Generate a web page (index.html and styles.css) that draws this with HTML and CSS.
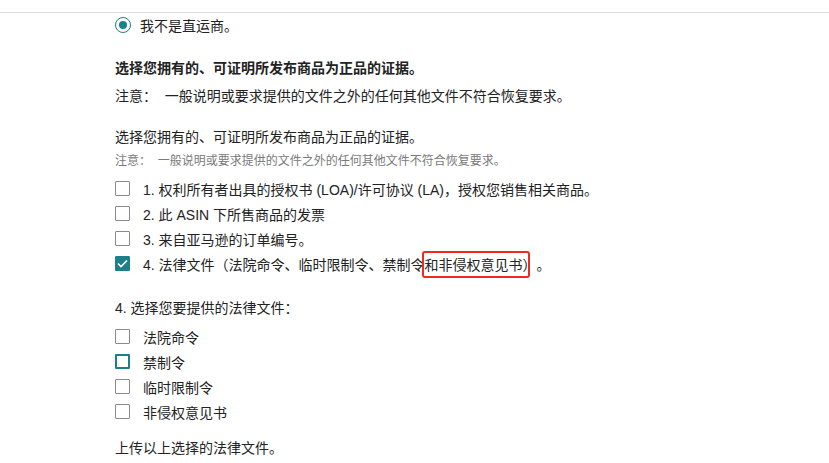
FILE: index.html
```html
<!DOCTYPE html>
<html lang="zh-CN">
<head>
  <meta charset="UTF-8" />
  <title>法律文件</title>
  <link rel="stylesheet" href="styles.css">
</head>
<body>
  <div class="top-bar"></div>

  <div class="content">
    <label class="radio-row">
      <span class="radio"><span class="radio-dot"></span></span>
      <span>我不是直运商。</span>
    </label>

    <p class="title-bold">选择您拥有的、可证明所发布商品为正品的证据。</p>
    <p class="note">注意：&nbsp; 一般说明或要求提供的文件之外的任何其他文件不符合恢复要求。</p>

    <p class="title">选择您拥有的、可证明所发布商品为正品的证据。</p>
    <p class="note-small">注意：&nbsp; 一般说明或要求提供的文件之外的任何其他文件不符合恢复要求。</p>

    <ul class="checks">
      <li><span class="box"></span>1. 权利所有者出具的授权书 (LOA)/许可协议 (LA)，授权您销售相关商品。</li>
      <li><span class="box"></span>2. 此 ASIN 下所售商品的发票</li>
      <li><span class="box"></span>3. 来自亚马逊的订单编号。</li>
      <li>
        <span class="box checked">
          <svg width="11" height="9" viewBox="0 0 11 9"><path d="M1 4.5 L4 7.5 L10 1.5" fill="none" stroke="#fff" stroke-width="1.6"/></svg>
        </span>4. 法律文件（法院命令、临时限制令、禁制令<span class="mark">和非侵权意见书）</span>。
      </li>
    </ul>

    <p class="title sub">4. 选择您要提供的法律文件：</p>

    <ul class="checks second">
      <li><span class="box"></span>法院命令</li>
      <li><span class="box focused"></span>禁制令</li>
      <li><span class="box"></span>临时限制令</li>
      <li><span class="box"></span>非侵权意见书</li>
    </ul>

    <p class="title upload">上传以上选择的法律文件。</p>
  </div>
</body>
</html>
```

FILE: styles.css
```css
body {
  margin: 0;
  font-family: "Liberation Sans", "Noto Sans CJK SC", sans-serif;
  font-size: 14px;
  color: #222;
  background: #fff;
}

.top-bar {
  height: 12px;
  border-bottom: 1px solid #dcdcdc;
}

.content {
  padding-left: 115px;
}

p {
  margin: 0;
}

.radio-row {
  display: flex;
  align-items: center;
  height: 24px;
}

.radio {
  width: 16px;
  height: 16px;
  box-sizing: border-box;
  border: 1.5px solid #1b7f8c;
  border-radius: 50%;
  display: flex;
  align-items: center;
  justify-content: center;
  margin-right: 9px;
}

.radio-dot {
  width: 8px;
  height: 8px;
  border-radius: 50%;
  background: #1b7f8c;
}

.title-bold {
  font-weight: bold;
  line-height: 20px;
  margin-top: 21px;
}

.note {
  line-height: 20px;
  margin-top: 8px;
}

.title {
  line-height: 20px;
  margin-top: 21px;
}

.note-small {
  font-size: 12px;
  color: #7a7a7a;
  line-height: 18px;
  margin-top: 5px;
}

.checks {
  list-style: none;
  margin: 6px 0 0;
  padding: 0;
}

.checks li {
  display: flex;
  align-items: center;
  height: 25px;
}

.box {
  width: 15px;
  height: 15px;
  box-sizing: border-box;
  border: 1px solid #8a8a8a;
  border-radius: 1px;
  margin-right: 13px;
  display: flex;
  align-items: center;
  justify-content: center;
  flex-shrink: 0;
}

.box.checked {
  background: #1b7f8c;
  border-color: #1b7f8c;
}

.box.focused {
  border: 2px solid #1b7f8c;
}

.mark {
  position: relative;
}

.mark::after {
  content: "";
  position: absolute;
  left: -3px;
  right: 7px;
  top: -3px;
  bottom: -4px;
  border: 2px solid #ee2b20;
  border-radius: 3px;
}

.sub {
  margin-top: 22px;
}

.checks.second {
  margin-top: 6px;
}

.upload {
  margin-top: 14px;
}
```
